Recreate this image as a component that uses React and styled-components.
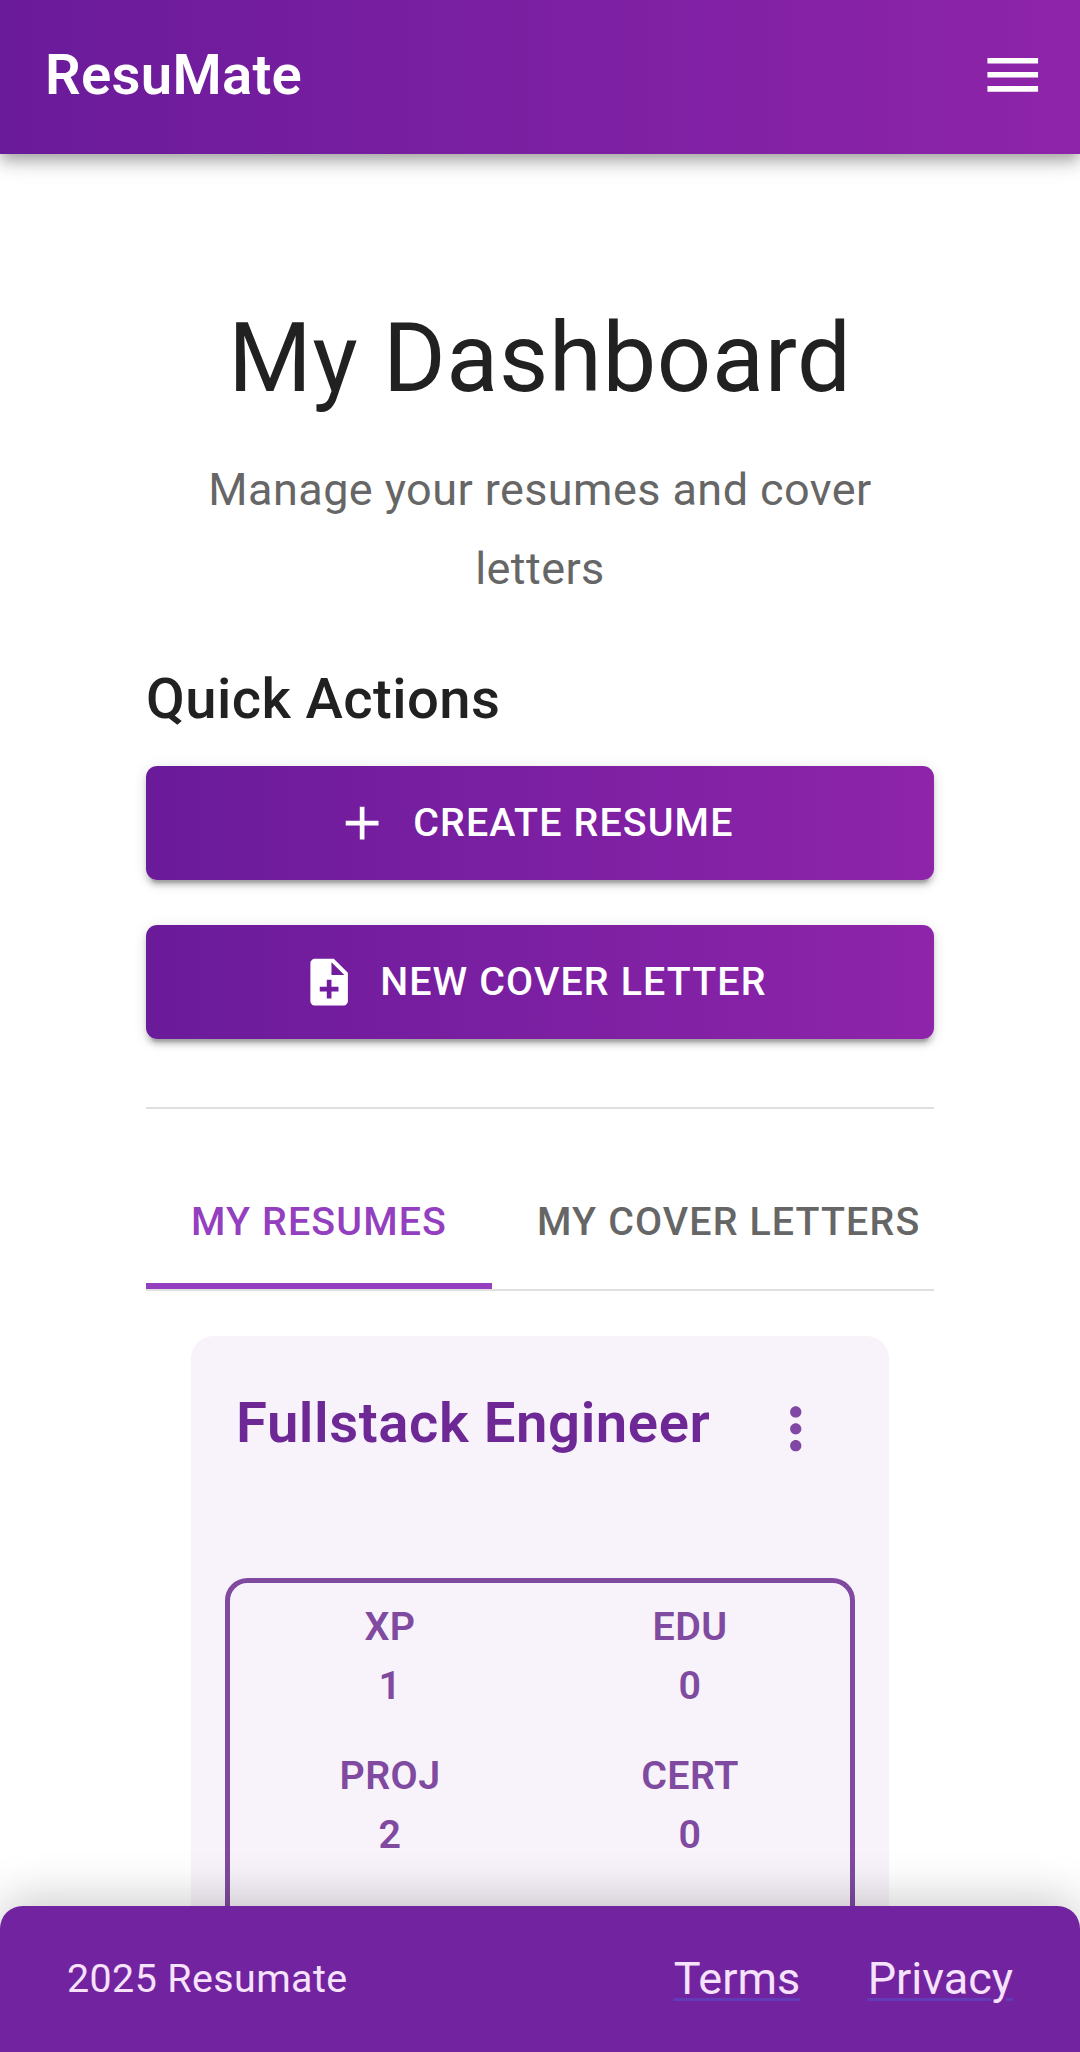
import React from "react";
import styled, { createGlobalStyle } from "styled-components";

const GlobalStyle = createGlobalStyle`
  *, *::before, *::after { box-sizing: border-box; }
  html, body { margin: 0; padding: 0; background: #fff; }
  body {
    font-family: Roboto, "Liberation Sans", sans-serif;
    color: #212121;
    overflow: hidden;
  }
  h1, h2, h3, p { margin: 0; }
  button { font-family: inherit; border: 0; background: none; margin: 0; padding: 0; }
`;

const brandGradient = "linear-gradient(90deg, #6a1b9a 0%, #8e24aa 100%)";

const Page = styled.div`
  display: flex;
  flex-direction: column;
  height: 100vh;
  overflow: hidden;
`;

const AppBar = styled.header`
  flex: none;
  z-index: 2;
  position: relative;
  height: 154px;
  padding: 0 34px 5px 45px;
  display: flex;
  align-items: center;
  justify-content: space-between;
  background: ${brandGradient};
  box-shadow:
    0 5.6px 11.2px -2.8px rgba(0, 0, 0, 0.2),
    0 11.2px 14px 0 rgba(0, 0, 0, 0.14),
    0 2.8px 28px 0 rgba(0, 0, 0, 0.12);
`;

const Brand = styled.h1`
  font-size: 56.25px;
  line-height: 90px;
  font-weight: 600;
  letter-spacing: 0.005em;
  color: #fff;
`;

const Icon = styled.svg`
  display: block;
  flex: none;
  width: ${(p) => p.$size}px;
  height: ${(p) => p.$size}px;
  fill: currentColor;
`;

const MenuButton = styled.button`
  color: #fff;
`;

const Main = styled.main`
  flex: 1;
  min-height: 0;
  overflow: hidden;
  padding: 145px 146px 0;
`;

const Heading = styled.h2`
  font-size: 95.625px;
  line-height: 118px;
  font-weight: 400;
  letter-spacing: 0.00735em;
  text-align: center;
`;

const Subtitle = styled.p`
  margin-top: 33px;
  padding: 0 45px;
  font-size: 45px;
  line-height: 79px;
  letter-spacing: 0.00938em;
  text-align: center;
  color: #666;
`;

const SectionTitle = styled.h3`
  margin-top: 46px;
  font-size: 56.25px;
  line-height: 90px;
  font-weight: 500;
  letter-spacing: 0.0075em;
`;

const Actions = styled.div`
  margin-top: 22px;
  display: flex;
  flex-direction: column;
  gap: 45px;
`;

const ActionButton = styled.button`
  height: 114px;
  display: flex;
  align-items: center;
  justify-content: center;
  gap: 22.5px;
  padding-right: 12px;
  border-radius: 11.25px;
  background: ${brandGradient};
  color: #fff;
  font-size: 39.375px;
  font-weight: 500;
  letter-spacing: 0.02857em;
  box-shadow:
    0 8.4px 2.8px -5.6px rgba(0, 0, 0, 0.2),
    0 5.6px 5.6px 0 rgba(0, 0, 0, 0.14),
    0 2.8px 14px 0 rgba(0, 0, 0, 0.12);
`;

const ActionLabel = styled.span`
  padding-bottom: 2px;
`;

const Divider = styled.hr`
  margin: 68px 0 0;
  border: 0;
  height: 2px;
  background: #dedede;
`;

const Tabs = styled.div`
  margin-top: 45px;
  height: 137px;
  display: flex;
  overflow: hidden;
  border-bottom: 2px solid #e0e0e0;
`;

const Tab = styled.button`
  flex: none;
  height: 135px;
  padding: 0 45px;
  font-size: 39.375px;
  font-weight: 500;
  letter-spacing: 0.02857em;
  color: ${(p) => (p.$active ? "#943fc0" : "#666")};
  box-shadow: ${(p) => (p.$active ? "inset 0 -6px 0 #943fc0" : "none")};
`;

const Card = styled.article`
  margin: 45px 45px 0;
  height: 800px;
  padding: 0 34px;
  border-radius: 22.5px;
  background: #f8f3fa;
`;

const CardHeader = styled.div`
  height: 242px;
  padding: 42px 26px 0 11px;
  display: flex;
  align-items: flex-start;
  justify-content: space-between;
`;

const CardTitle = styled.h3`
  font-size: 56.25px;
  line-height: 90px;
  font-weight: 600;
  letter-spacing: 0.0103em;
  color: #6d2896;
`;

const MoreButton = styled.button`
  padding-top: 17px;
  color: #8048a4;
`;

const Stats = styled.div`
  height: 500px;
  padding: 14px 10px;
  display: grid;
  grid-template-columns: 1fr 1fr;
  grid-auto-rows: 118px;
  row-gap: 31px;
  border: 5px solid #7f4a9f;
  border-radius: 22.5px;
`;

const Stat = styled.div`
  display: flex;
  flex-direction: column;
  align-items: center;
  font-size: 39.375px;
  line-height: 59px;
  font-weight: 600;
  letter-spacing: 0.01071em;
  color: #7f4a9f;
`;

const Footer = styled.footer`
  flex: none;
  position: relative;
  z-index: 2;
  height: 146px;
  padding: 0 67px;
  display: flex;
  align-items: center;
  justify-content: space-between;
  border-radius: 22.5px 22.5px 0 0;
  background: #7224a0;
  color: #f6e2fb;
  box-shadow: 0 -5.6px 48px rgba(0, 0, 0, 0.22);
`;

const Copyright = styled.p`
  font-size: 39.375px;
  line-height: 56px;
  letter-spacing: 0.01071em;
`;

const FooterLinks = styled.nav`
  display: flex;
  gap: 67.5px;
  padding-bottom: 2px;
`;

const FooterLink = styled.a`
  font-size: 45px;
  line-height: 67px;
  color: inherit;
  text-decoration: underline;
  text-decoration-color: #643bb6;
  text-decoration-thickness: 3px;
  text-underline-offset: 4px;
`;

const stats = [
  ["XP", 1],
  ["EDU", 0],
  ["PROJ", 2],
  ["CERT", 0],
];

export default function App() {
  return (
    <>
      <GlobalStyle />
      <Page>
        <AppBar>
          <Brand>ResuMate</Brand>
          <MenuButton aria-label="Menu">
            <Icon $size={67.5} viewBox="0 0 24 24">
              <path d="M3 18h18v-2H3zm0-5h18v-2H3zm0-7v2h18V6z" />
            </Icon>
          </MenuButton>
        </AppBar>
        <Main>
          <Heading>My Dashboard</Heading>
          <Subtitle>Manage your resumes and cover letters</Subtitle>
          <SectionTitle>Quick Actions</SectionTitle>
          <Actions>
            <ActionButton>
              <Icon $size={56.25} viewBox="0 0 24 24">
                <path d="M19 13h-6v6h-2v-6H5v-2h6V5h2v6h6z" />
              </Icon>
              <ActionLabel>CREATE RESUME</ActionLabel>
            </ActionButton>
            <ActionButton>
              <Icon $size={56.25} viewBox="0 0 24 24">
                <path d="M14 2H6c-1.100 0-1.990.9-1.990 2L4 20c0 1.100.89 2 1.990 2H18c1.100 0 2-.9 2-2V8zm2 14h-3v3h-2v-3H8v-2h3v-3h2v3h3zm-3-7V3.500L18.500 9z" />
              </Icon>
              <ActionLabel>NEW COVER LETTER</ActionLabel>
            </ActionButton>
          </Actions>
          <Divider />
          <Tabs>
            <Tab $active>MY RESUMES</Tab>
            <Tab>MY COVER LETTERS</Tab>
          </Tabs>
          <Card>
            <CardHeader>
              <CardTitle>Fullstack Engineer</CardTitle>
              <MoreButton aria-label="More">
                <Icon $size={67.5} viewBox="0 0 24 24">
                  <path d="M12 8c1.100 0 2-.9 2-2s-.9-2-2-2-2 .9-2 2 .9 2 2 2m0 2c-1.100 0-2 .9-2 2s.9 2 2 2 2-.9 2-2-.9-2-2-2m0 6c-1.100 0-2 .9-2 2s.9 2 2 2 2-.9 2-2-.9-2-2-2" />
                </Icon>
              </MoreButton>
            </CardHeader>
            <Stats>
              {stats.map(([label, value]) => (
                <Stat key={label}>
                  <span>{label}</span>
                  <span>{value}</span>
                </Stat>
              ))}
            </Stats>
          </Card>
        </Main>
        <Footer>
          <Copyright>2025 Resumate</Copyright>
          <FooterLinks>
            <FooterLink>Terms</FooterLink>
            <FooterLink>Privacy</FooterLink>
          </FooterLinks>
        </Footer>
      </Page>
    </>
  );
}
